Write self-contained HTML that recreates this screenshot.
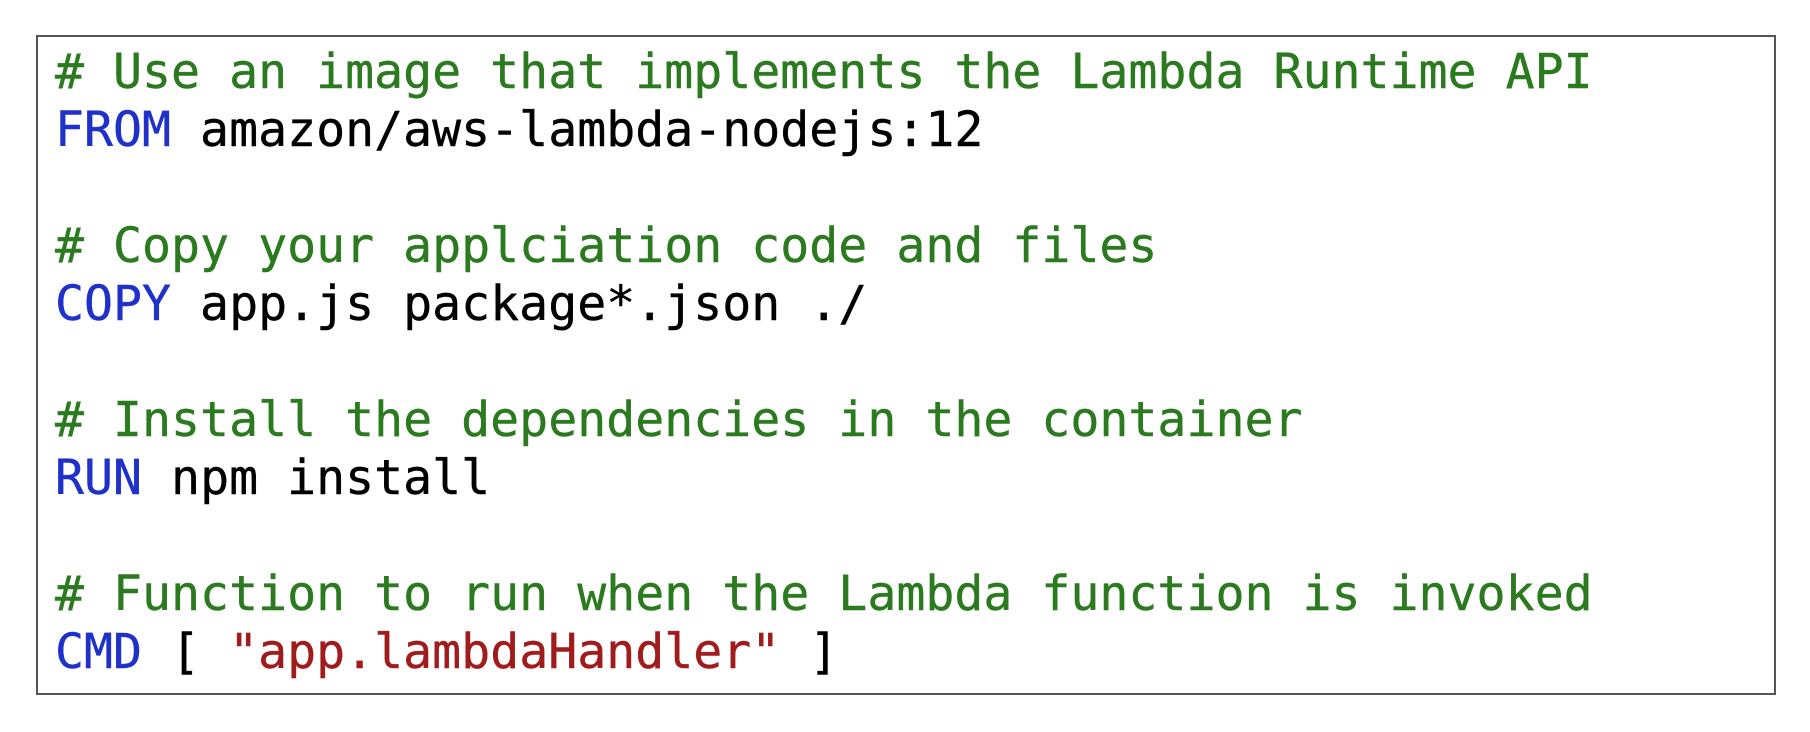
<!DOCTYPE html>
<html><head><style>
html,body{margin:0;padding:0;background:#fff;width:1810px;height:732px;overflow:hidden}
.box{position:absolute;left:36px;top:35px;width:1740px;height:660px;border:2px solid #555;box-sizing:border-box}
pre{position:absolute;left:55px;top:43px;margin:0;font-family:"DejaVu Sans Mono","Liberation Mono",monospace;font-size:48.2px;line-height:58px;color:#000;-webkit-text-stroke:0.4px currentColor}
.c{color:#2b7a1f}.k{color:#1f31c9}.s{color:#a01c1c}
</style></head><body>
<div class="box"></div>
<pre><span class="c"># Use an image that implements the Lambda Runtime API</span>
<span class="k">FROM</span> amazon/aws-lambda-nodejs:12

<span class="c"># Copy your applciation code and files</span>
<span class="k">COPY</span> app.js package*.json ./

<span class="c"># Install the dependencies in the container</span>
<span class="k">RUN</span> npm install

<span class="c"># Function to run when the Lambda function is invoked</span>
<span class="k">CMD</span> [ <span class="s">"app.lambdaHandler"</span> ]</pre>
</body></html>
